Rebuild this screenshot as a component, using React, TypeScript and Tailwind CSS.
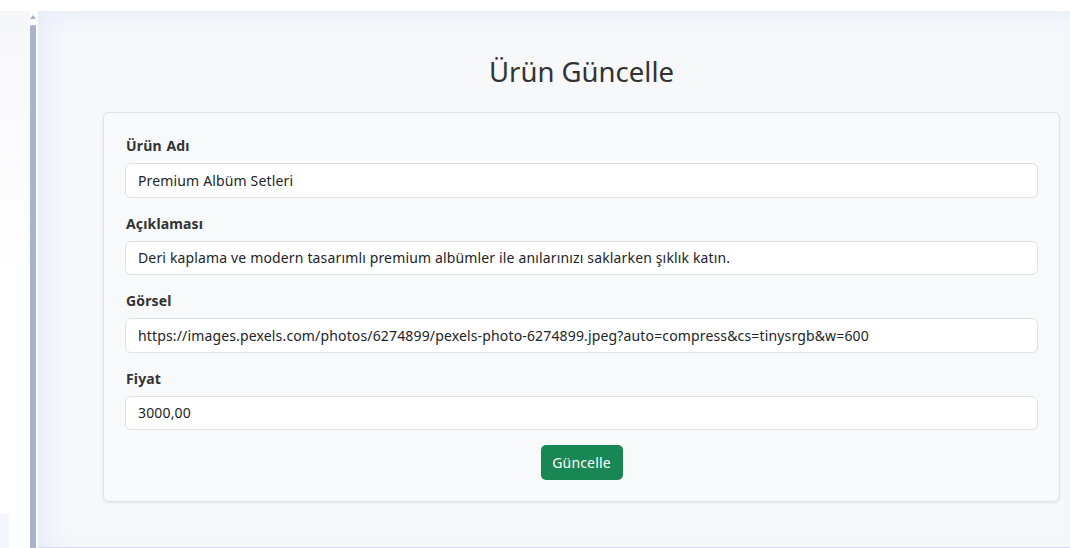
import React from 'react';

const fields = [
  { label: 'Ürün Adı', value: 'Premium Albüm Setleri' },
  {
    label: 'Açıklaması',
    value: 'Deri kaplama ve modern tasarımlı premium albümler ile anılarınızı saklarken şıklık katın.',
  },
  {
    label: 'Görsel',
    value: 'https://images.pexels.com/photos/6274899/pexels-photo-6274899.jpeg?auto=compress&cs=tinysrgb&w=600',
  },
  { label: 'Fiyat', value: '3000,00' },
];

const App: React.FC = () => {
  return (
    <div
      className="w-[1070px] h-[548px] bg-white overflow-hidden flex flex-col"
      style={{ fontFamily: '"Noto Sans", "Open Sans", sans-serif' }}
    >
      {/* top strip */}
      <div className="h-[11px] shrink-0 bg-white" />

      <div className="flex flex-1 min-h-0">
        {/* sidebar edge + scrollbar */}
        <div className="w-[38px] shrink-0 flex">
          <div className="w-[30px] flex flex-col justify-end bg-gradient-to-b from-[#f6f7f9] via-white to-white">
            <div className="h-[34px] w-[9px] bg-[#f3f6fd] rounded-tr-[3px]" />
          </div>
          <div className="w-[6px] flex flex-col items-center pt-[4px]">
            <div className="w-0 h-0 border-l-[3px] border-r-[3px] border-b-[4px] border-l-transparent border-r-transparent border-b-[#aab3cc]" />
            <div className="mt-[6px] w-[6px] flex-1 bg-[#aab3cc] rounded-t-[2px]" />
          </div>
          <div className="w-[2px]" />
        </div>

        {/* main */}
        <div className="flex-1 bg-[#f7f8fa] border-b border-[#d3dcf2] shadow-[inset_22px_0_30px_-14px_#e6ecfb,inset_0_14px_20px_-10px_#e9eefb]">
          <div className="ml-[65px] w-[957px] flex flex-col">
            <h1 className="mt-[41px] text-center text-[27.5px] leading-[40px] text-[#333] font-normal">
              Ürün Güncelle
            </h1>

            <div className="mt-[20px] bg-[#f8f9fa] border border-[#dee2e6] rounded-[6px] shadow-[0_1px_3px_rgba(0,0,0,0.08)] px-[21px] pt-[22px] pb-[21px] tracking-[0.15px] [word-spacing:1.8px]">
              {fields.map((f) => (
                <div key={f.label} className="mb-[15px]">
                  <label className="block text-[14px] leading-[21px] font-bold text-[#333] mb-[7px] pl-[1px] [word-spacing:1px]">
                    {f.label}
                  </label>
                  <input
                    type="text"
                    defaultValue={f.value}
                    className="block w-full h-[34.5px] bg-white border border-[#dee2e6] rounded-[6px] px-[12px] text-[14px] text-[#212529] outline-none"
                  />
                </div>
              ))}
              <div className="flex justify-center">
                <button className="h-[35px] w-[82px] bg-[#198754] text-white text-[14px] rounded-[5px]">
                  Güncelle
                </button>
              </div>
            </div>
          </div>
        </div>
      </div>
    </div>
  );
};

export default App;
